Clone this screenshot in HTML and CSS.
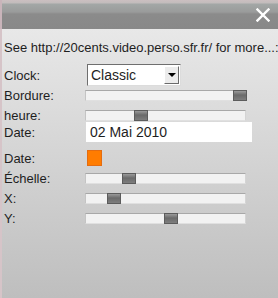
FILE: index.html
```html
<!DOCTYPE html>
<html lang="fr">
<head>
  <meta charset="UTF-8">
  <title>Clock</title>
  <link rel="stylesheet" href="styles.css">
</head>
<body>
  <div class="titlebar">
    <span class="close-button">
      <svg width="14" height="14" viewBox="0 0 14 14"><path d="M1.5 1.5 L12.5 12.5 M12.5 1.5 L1.5 12.5" stroke="#ffffff" stroke-width="2.4" stroke-linecap="square"/></svg>
    </span>
  </div>
  <div class="panel">
    <div class="info">See http://20cents.video.perso.sfr.fr/ for more...:</div>
    <div class="row row-clock">
      <span class="label">Clock:</span>
      <div class="select">
        <span class="select-text">Classic</span>
        <span class="select-btn"><span class="arrow"></span></span>
      </div>
    </div>
    <div class="row row-bordure">
      <span class="label">Bordure:</span>
      <div class="slider"><span class="thumb" style="left:147px"></span></div>
    </div>
    <div class="row row-heure">
      <span class="label">heure:</span>
      <div class="slider"><span class="thumb" style="left:48px"></span></div>
    </div>
    <div class="row row-date">
      <span class="label">Date:</span>
      <div class="text-input">02 Mai 2010</div>
    </div>
    <div class="row row-color">
      <span class="label">Date:</span>
      <span class="swatch"></span>
    </div>
    <div class="row row-slider">
      <span class="label">Échelle:</span>
      <div class="slider"><span class="thumb" style="left:36px"></span></div>
    </div>
    <div class="row row-slider">
      <span class="label">X:</span>
      <div class="slider"><span class="thumb" style="left:21px"></span></div>
    </div>
    <div class="row row-slider">
      <span class="label">Y:</span>
      <div class="slider"><span class="thumb" style="left:78px"></span></div>
    </div>
  </div>
</body>
</html>
```
FILE: styles.css
```css
html, body {
  height: 100%;
}
body {
  margin: 0;
  font-family: 'Liberation Sans', Arial, sans-serif;
  font-size: 13px;
  color: #1e1e1e;
  display: flex;
  flex-direction: column;
  overflow: hidden;
}
.titlebar {
  height: 29px;
  flex-shrink: 0;
  background: linear-gradient(#cbbfc0 0, #c2bcbc 3px, #a3a7a6 4px, #9a9b9b 12px, #8b8b8b 14px, #888888 29px);
  box-shadow: inset 2px 0 0 #c9b4ba;
  display: flex;
  justify-content: flex-end;
  align-items: flex-start;
}
.close-button {
  margin: 8px 8px 0 0;
  width: 14px;
  height: 14px;
  display: flex;
}
.panel {
  flex: 1;
  background: linear-gradient(#e8e8e8, #bebebe);
  box-shadow: inset 2px 0 0 #d6c4c8;
  padding-top: 9px;
}
.info {
  height: 20px;
  line-height: 20px;
  padding-left: 4px;
  white-space: nowrap;
}
.row {
  display: flex;
  align-items: center;
}
.label {
  width: 81px;
  padding-left: 4px;
  flex-shrink: 0;
}
.row-clock {
  height: 22px;
  margin-top: 6px;
}
.row-bordure {
  height: 12px;
  margin-top: 3px;
}
.row-heure {
  height: 12px;
  margin-top: 8px;
}
.row-date {
  height: 20px;
  margin-top: 1px;
}
.row-color {
  height: 16px;
  margin-top: 8px;
}
.row-slider {
  height: 12px;
  margin-top: 8px;
}
.row-color + .row-slider {
  margin-top: 6px;
}
.select {
  margin-left: 2px;
  width: 94px;
  height: 22px;
  box-sizing: border-box;
  background: #ffffff;
  border-top: 1px solid #6f6f6f;
  border-left: 1px solid #6f6f6f;
  border-right: 1px solid #dcdcdc;
  border-bottom: 1px solid #dcdcdc;
  display: flex;
  align-items: center;
  justify-content: space-between;
}
.select-text {
  padding-left: 3px;
  font-size: 14px;
}
.select-btn {
  width: 15px;
  height: 18px;
  margin-right: 1px;
  box-sizing: border-box;
  background: #ececec;
  border-top: 1px solid #ffffff;
  border-left: 1px solid #ffffff;
  border-right: 1px solid #6a6a6a;
  border-bottom: 1px solid #6a6a6a;
  display: flex;
  align-items: center;
  justify-content: center;
}
.arrow {
  width: 0;
  height: 0;
  border-left: 4px solid transparent;
  border-right: 4px solid transparent;
  border-top: 4px solid #000000;
}
.slider {
  position: relative;
  width: 161px;
  height: 11px;
  box-sizing: border-box;
  background: #f2f2f2;
  border-top: 1px solid #a8a8a8;
  border-left: 1px solid #c4c4c4;
  border-right: 1px solid #d4d4d4;
  border-bottom: 1px solid #e0e0e0;
}
.thumb {
  position: absolute;
  top: -1px;
  width: 14px;
  height: 11px;
  box-sizing: border-box;
  background: linear-gradient(#9a9a9a, #6a6a6a 45%, #7e7e7e);
  border: 1px solid #5c5c5c;
}
.text-input {
  margin-left: 1px;
  width: 166px;
  height: 20px;
  line-height: 20px;
  box-sizing: border-box;
  background: #ffffff;
  padding-left: 4px;
  font-size: 14px;
}
.swatch {
  margin-left: 2px;
  width: 15px;
  height: 16px;
  box-sizing: border-box;
  background: #ff7c00;
  border: 1px solid #e46c10;
}
```
